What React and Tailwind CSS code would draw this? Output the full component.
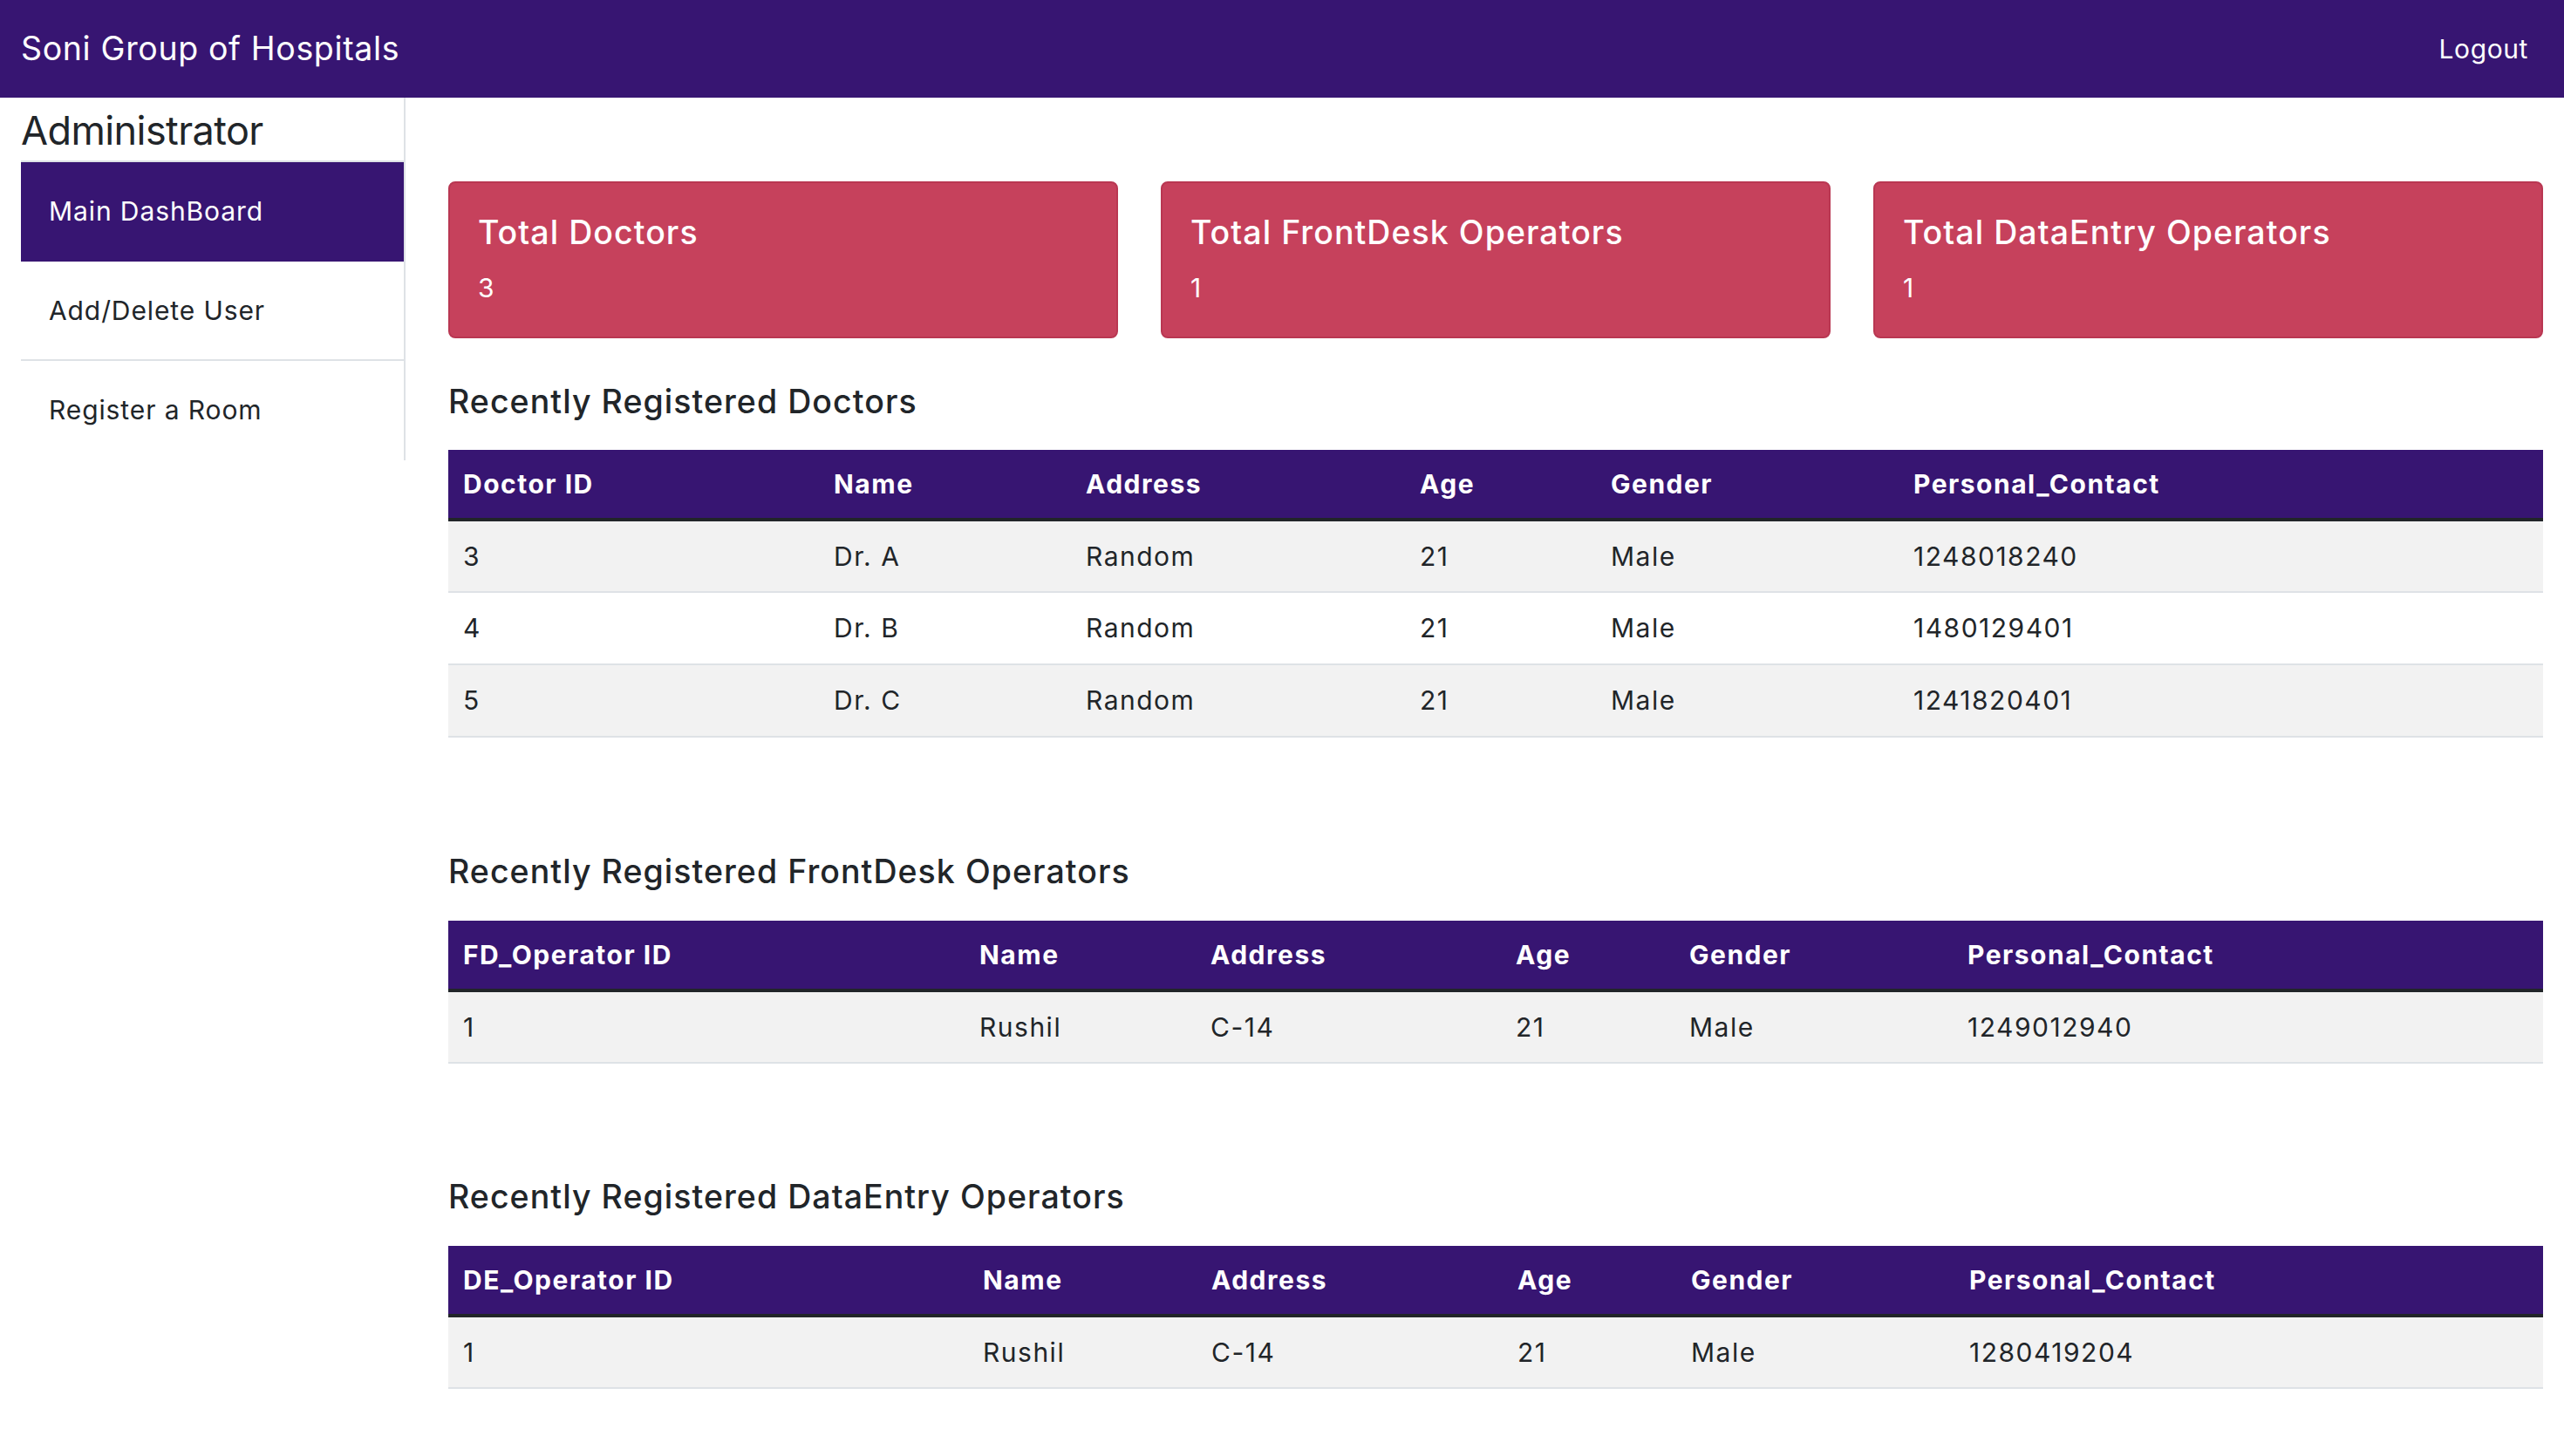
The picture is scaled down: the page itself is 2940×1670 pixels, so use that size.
const DOCTORS = [
  { id: 3, name: 'Dr. A', address: 'Random', age: 21, gender: 'Male', contact: '1248018240' },
  { id: 4, name: 'Dr. B', address: 'Random', age: 21, gender: 'Male', contact: '1480129401' },
  { id: 5, name: 'Dr. C', address: 'Random', age: 21, gender: 'Male', contact: '1241820401' },
]

const FD_OPERATORS = [{ id: 1, name: 'Rushil', address: 'C-14', age: 21, gender: 'Male', contact: '1249012940' }]
const DE_OPERATORS = [{ id: 1, name: 'Rushil', address: 'C-14', age: 21, gender: 'Male', contact: '1280419204' }]

const NAV = ['Main DashBoard', 'Add/Delete User', 'Register a Room']

function StatCard({ title, value }) {
  return (
    <div className="h-[180px] rounded-[8px] border-2 border-[#b93752] bg-[#c6415c] px-[32px] pt-[34px] text-white">
      <h5 className="text-[37.5px] font-medium leading-[45px] tracking-[0.028em]">{title}</h5>
      <p className="mt-[19px] text-[30px] leading-[45px]">{value}</p>
    </div>
  )
}

function DataTable({ idLabel, widths, rows }) {
  const heads = [idLabel, 'Name', 'Address', 'Age', 'Gender', 'Personal_Contact']
  return (
    <table className="w-full table-fixed border-collapse text-left text-[30px] tracking-[0.05em] text-[#212529]">
      <thead>
        <tr className="border-b-[4px] border-[#212529] bg-[#371572] text-white">
          {heads.map((h, i) => (
            <th key={h} className={`${widths[i]} h-[80px] px-[17px] font-bold`}>
              {h}
            </th>
          ))}
        </tr>
      </thead>
      <tbody>
        {rows.map((r, i) => (
          <tr key={r.contact} className={`border-b-2 border-[#dee2e6] ${i % 2 === 0 ? 'bg-[#f2f2f2]' : 'bg-white'}`}>
            {[r.id, r.name, r.address, r.age, r.gender, r.contact].map((v, j) => (
              <td key={j} className="h-[83px] px-[17px]">
                {v}
              </td>
            ))}
          </tr>
        ))}
      </tbody>
    </table>
  )
}

export default function App() {
  return (
    <div className="min-h-screen bg-white font-['Inter','Noto_Sans',sans-serif] text-[#212529]">
      <nav className="flex h-[112px] items-center justify-between bg-[#371572] pl-[24px] pr-[41px] text-white">
        <span className="text-[37.5px] leading-none tracking-[0.017em]">Soni Group of Hospitals</span>
        <a className="text-[30px] tracking-[0.02em]" href="#">
          Logout
        </a>
      </nav>

      <div className="flex">
        <aside className="w-[465px] shrink-0 self-start border-r-2 border-[#dee2e6] pl-[24px]">
          <h4 className="pt-[11px] text-[45px] leading-[54px] tracking-[-0.013em]">Administrator</h4>
          <ul className="mt-[7px] border-t-2 border-[#dee2e6]">
            {NAV.map((item, i) => (
              <li
                key={item}
                className={`flex h-[114px] items-center border-b-2 pl-[32px] text-[30px] tracking-[0.03em] ${
                  i === 0 ? 'border-[#371572] bg-[#371572] text-white' : i === NAV.length - 1 ? 'border-transparent' : 'border-[#dee2e6]'
                }`}
              >
                {item}
              </li>
            ))}
          </ul>
        </aside>

        <main className="flex-1 pl-[49px] pr-[24px] pt-[96px]">
          <div className="grid grid-cols-3 gap-[49px]">
            <StatCard title="Total Doctors" value="3" />
            <StatCard title="Total FrontDesk Operators" value="1" />
            <StatCard title="Total DataEntry Operators" value="1" />
          </div>

          <h4 className="mb-[33px] mt-[50px] text-[37.5px] font-medium leading-[45px] tracking-[0.028em]">
            Recently Registered Doctors
          </h4>
          <DataTable
            idLabel="Doctor ID"
            widths={['w-[425px]', 'w-[289px]', 'w-[383px]', 'w-[219px]', 'w-[347px]', 'w-[739px]']}
            rows={DOCTORS}
          />

          <h4 className="mb-[34px] mt-[131px] text-[37.5px] font-medium leading-[45px] tracking-[0.028em]">
            Recently Registered FrontDesk Operators
          </h4>
          <DataTable
            idLabel="FD_Operator ID"
            widths={['w-[592px]', 'w-[265px]', 'w-[350px]', 'w-[199px]', 'w-[319px]', 'w-[677px]']}
            rows={FD_OPERATORS}
          />

          <h4 className="mb-[34px] mt-[130px] text-[37.5px] font-medium leading-[45px] tracking-[0.028em]">
            Recently Registered DataEntry Operators
          </h4>
          <DataTable
            idLabel="DE_Operator ID"
            widths={['w-[596px]', 'w-[262px]', 'w-[351px]', 'w-[199px]', 'w-[319px]', 'w-[675px]']}
            rows={DE_OPERATORS}
          />
        </main>
      </div>
    </div>
  )
}
